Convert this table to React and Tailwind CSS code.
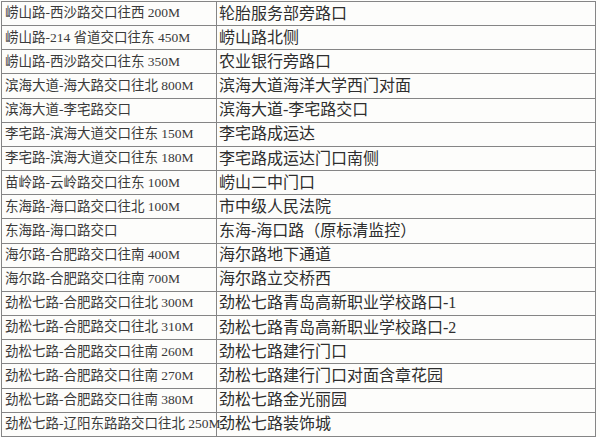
// Camera location list: two-column bordered table.

const rows = [
  ['崂山路-西沙路交口往西 200M', '轮胎服务部旁路口'],
  ['崂山路-214 省道交口往东 450M', '崂山路北侧'],
  ['崂山路-西沙路交口往东 350M', '农业银行旁路口'],
  ['滨海大道-海大路交口往北 800M', '滨海大道海洋大学西门对面'],
  ['滨海大道-李宅路交口', '滨海大道-李宅路交口'],
  ['李宅路-滨海大道交口往东 150M', '李宅路成运达'],
  ['李宅路-滨海大道交口往东 180M', '李宅路成运达门口南侧'],
  ['苗岭路-云岭路交口往东 100M', '崂山二中门口'],
  ['东海路-海口路交口往北 100M', '市中级人民法院'],
  ['东海路-海口路交口', '东海-海口路（原标清监控）'],
  ['海尔路-合肥路交口往南 400M', '海尔路地下通道'],
  ['海尔路-合肥路交口往南 700M', '海尔路立交桥西'],
  ['劲松七路-合肥路交口往北 300M', '劲松七路青岛高新职业学校路口-1'],
  ['劲松七路-合肥路交口往北 310M', '劲松七路青岛高新职业学校路口-2'],
  ['劲松七路-合肥路交口往南 260M', '劲松七路建行门口'],
  ['劲松七路-合肥路交口往南 270M', '劲松七路建行门口对面含章花园'],
  ['劲松七路-合肥路交口往南 380M', '劲松七路金光丽园'],
  ['劲松七路-辽阳东路路交口往北 250M', '劲松七路装饰城'],
]

const font = { fontFamily: '"Liberation Serif", "Noto Sans CJK SC", serif' }

export default function App() {
  return (
    <div className="w-[600px] h-[437px] bg-[#fdfdfb] overflow-hidden">
      <div className="ml-px mt-px w-[595px] border-l border-r border-t border-[#858585]" style={font}>
        {rows.map(([a, b], i) => (
          <div key={i} className="flex h-[24.17px] border-b border-[#858585]">
            <div
              className={
                a.length > 20
                  ? 'w-[215px] shrink-0 border-r border-[#858585] pl-[2px] flex items-center text-[13.5px] tracking-[-0.25px] text-[#3a3a3a] whitespace-nowrap'
                  : 'w-[215px] shrink-0 border-r border-[#858585] pl-[3px] flex items-center text-[13.5px] text-[#3a3a3a] whitespace-nowrap'
              }
            >
              {a}
            </div>
            <div className="flex-1 pl-[2px] flex items-center text-[16px] text-[#2e2e2e] whitespace-nowrap">
              {b}
            </div>
          </div>
        ))}
      </div>
    </div>
  )
}
